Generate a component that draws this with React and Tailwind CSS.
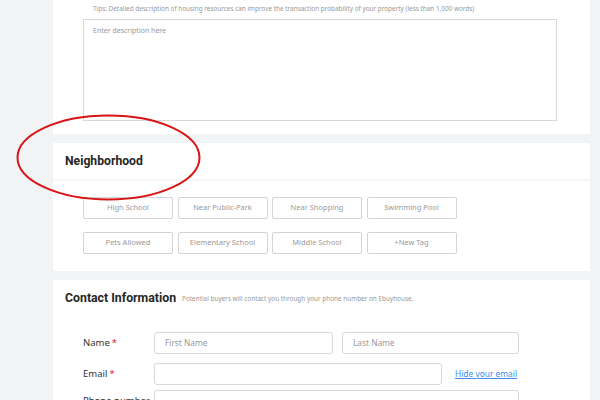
import React from 'react'

const tags = [
    'High School', 'Near Public-Park', 'Near Shopping', 'Swimming Pool',
    'Pets Allowed', 'Elementary School', 'Middle School', '+New Tag',
]

const Card = ({ className, children }) => (
    <div className={`bg-white ${className}`}>{children}</div>
)

const Label = ({ text, required }) => (
    <div className="w-[71px] text-[9.5px] text-[#333]">
        {text}
        {required && <span className="ml-[2px] text-[#e02020]">*</span>}
    </div>
)

const Input = ({ placeholder, className }) => (
    <div className={`h-[22px] rounded-[3px] border border-[#d9d9d9] px-[10px] flex items-center text-[8.3px] text-[#999] ${className}`}>
        {placeholder}
    </div>
)

export default function App() {
    return (
        <div
            className="relative w-[600px] h-[400px] overflow-hidden bg-[#f2f3f5] pl-[53px] pr-[10px]"
            style={{ fontFamily: '"Noto Sans", "Open Sans", sans-serif' }}
        >
            {/* description */}
            <Card className="pt-[4px] pb-[13px] pl-[30px]">
                <p className="pl-[10px] text-[6.4px] leading-[10px] text-[#999]">
                    Tips: Detailed description of housing resources can improve the transaction probability of your property (less than 1,000 words)
                </p>
                <div className="mt-[5px] h-[102px] w-[474px] border border-[#d9d9d9] px-[9px] pt-[6px] text-[7px] text-[#999]">
                    Enter description here
                </div>
            </Card>

            {/* neighborhood */}
            <Card className="mt-[9px]">
                <div className="h-[38px] flex items-center px-[12px] border-b-2 border-[#f5f6f7]">
                    <h2 className="text-[12.2px] font-bold text-[#262626] font-[Roboto]">Neighborhood</h2>
                </div>
                <div className="pl-[30px] pt-[16px] pb-[17px] grid grid-cols-[repeat(4,90px)] gap-x-[4.5px] gap-y-[13px]">
                    {tags.map((t) => (
                        <div
                            key={t}
                            className="h-[22px] rounded-[2px] border border-[#d4d4d4] flex items-center justify-center text-[7.5px] text-[#999]"
                        >
                            {t}
                        </div>
                    ))}
                </div>
            </Card>

            {/* contact */}
            <Card className="mt-[9px] h-[200px] px-[12px]">
                <div className="h-[36px] flex items-center gap-[6px]">
                    <h2 className="text-[12.3px] font-bold text-[#262626] font-[Roboto]">Contact Information</h2>
                    <span className="text-[6.4px] text-[#999] mt-[2px]">
                        Potential buyers will contact you through your phone number on Ebuyhouse.
                    </span>
                </div>
                <div className="pl-[18px] pt-[16px] flex flex-col gap-[9px]">
                    <div className="flex items-center">
                        <Label text="Name" required />
                        <Input placeholder="First Name" className="w-[179px]" />
                        <Input placeholder="Last Name" className="ml-[9px] w-[177px]" />
                    </div>
                    <div className="flex items-center">
                        <Label text="Email" required />
                        <Input className="w-[288px]" />
                        <a className="ml-[13px] text-[8.4px] text-[#3d8ef0] underline">Hide your email</a>
                    </div>
                    <div className="flex items-start -mt-[4px]">
                        <div className="pt-[4px]"><Label text="Phone number" /></div>
                        <Input className="w-[365px]" />
                    </div>
                </div>
            </Card>

            {/* annotation circle */}
            <svg className="absolute left-0 top-0 pointer-events-none" width="600" height="400">
                <ellipse cx="108.5" cy="157.5" rx="91" ry="42" fill="none" stroke="#d81414" strokeWidth="2" />
            </svg>
        </div>
    )
}
